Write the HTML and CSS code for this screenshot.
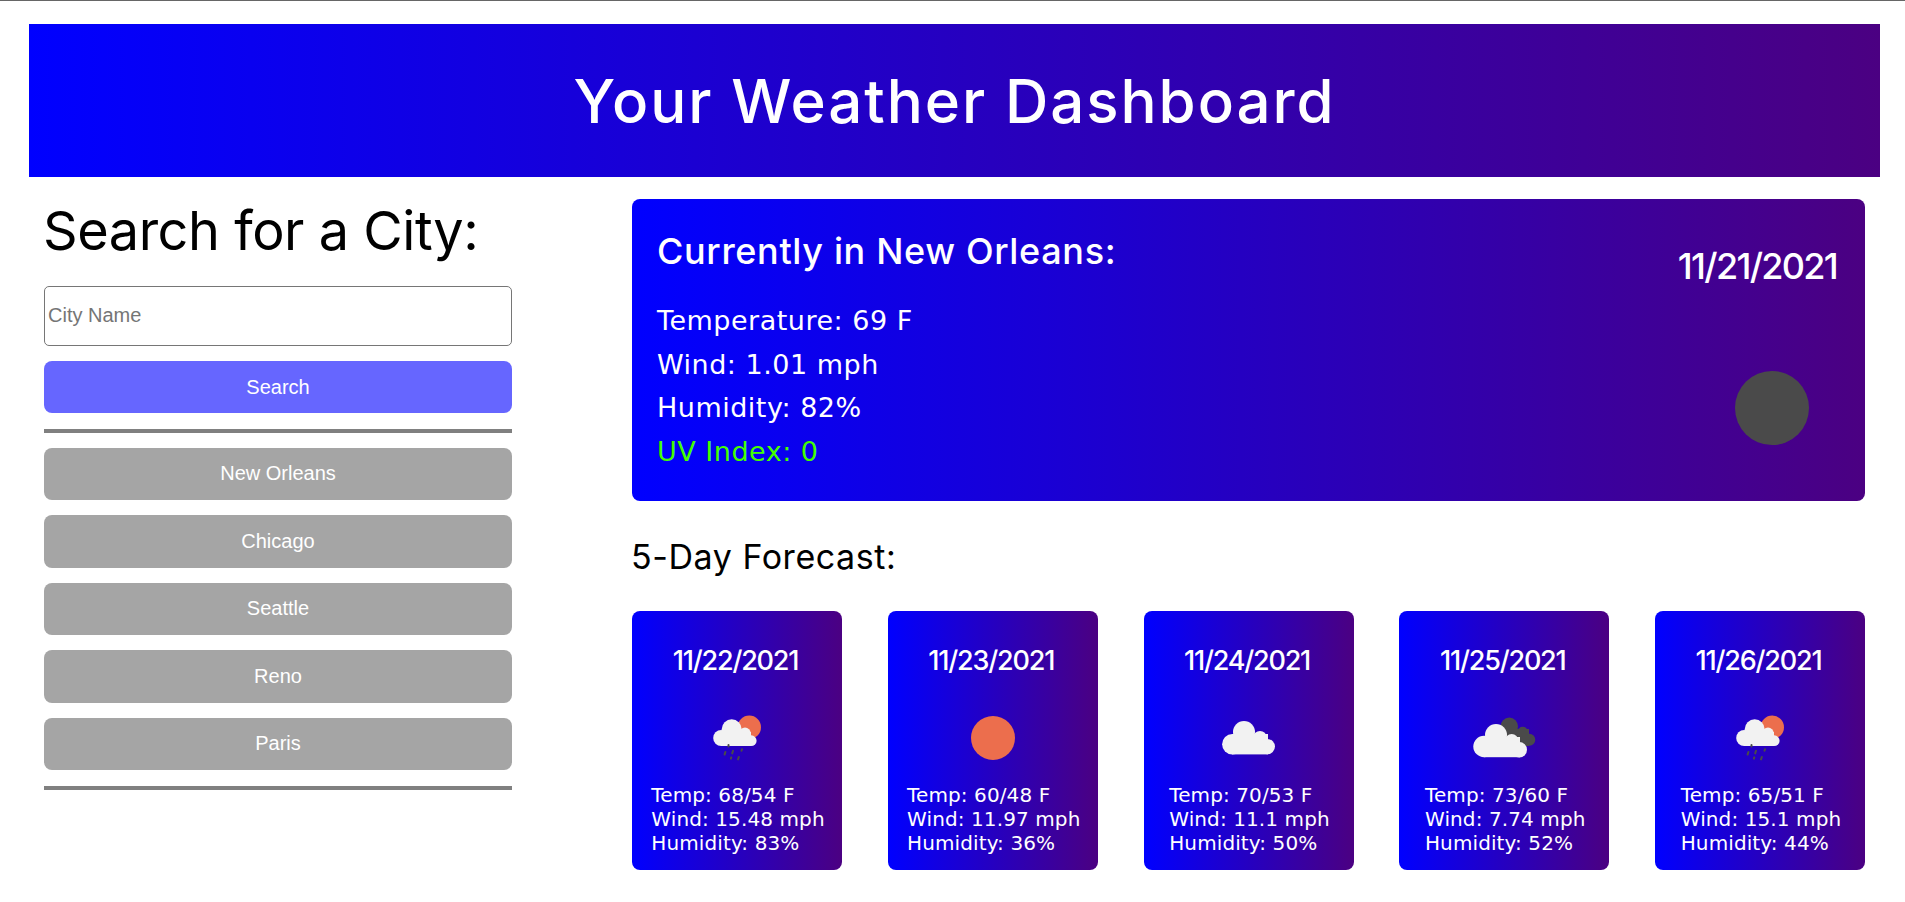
FILE: index.html
```html
<!DOCTYPE html>
<html lang="en">
<head>
  <meta charset="UTF-8">
  <meta name="viewport" content="width=device-width, initial-scale=1.0">
  <title>Your Weather Dashboard</title>
  <link rel="stylesheet" href="styles.css">
</head>
<body>

<header class="banner">
  <h1>Your Weather Dashboard</h1>
</header>

<div class="content">
  <aside class="sidebar">
    <h2 class="search-title">Search for a City:</h2>
    <input class="city-input" type="text" placeholder="City Name">
    <button class="btn btn-search">Search</button>
    <hr class="rule rule-top">
    <div class="history">
      <button class="btn btn-city">New Orleans</button>
      <button class="btn btn-city">Chicago</button>
      <button class="btn btn-city">Seattle</button>
      <button class="btn btn-city">Reno</button>
      <button class="btn btn-city">Paris</button>
    </div>
    <hr class="rule rule-bottom">
  </aside>

  <main class="main">
    <section class="current">
      <div class="current-info">
        <h3 class="current-title">Currently in New Orleans:</h3>
        <p>Temperature: 69 F</p>
        <p>Wind: 1.01 mph</p>
        <p>Humidity: 82%</p>
        <p class="uv">UV Index: 0</p>
      </div>
      <div class="current-side">
        <div class="current-date">11/21/2021</div>
        <div class="current-icon"></div>
      </div>
    </section>

    <h3 class="forecast-title">5-Day Forecast:</h3>

    <section class="forecast">
      <article class="day">
        <div class="day-date">11/22/2021</div>
        <svg class="day-icon" viewBox="0 0 100 100">
          <circle class="sun" cx="62.3" cy="39.3" r="11.7"/>
          <g class="cloud">
            <circle cx="44.7" cy="41.3" r="10"/>
            <circle cx="34.2" cy="50" r="8"/>
            <circle cx="58" cy="45.3" r="5.7"/>
            <circle cx="64.2" cy="52.7" r="5.4"/>
            <rect x="34" y="44" width="30" height="14"/>
          </g>
          <g class="rain">
            <path d="M41.5 57v1.5M38.4 64l-.8 2.6M46 62.8l-.8 2.6M55 61.2l-.5 1.6M44.3 69.4l-.4 1.2M51.8 69l-.8 2.4"/>
          </g>
        </svg>
        <div class="day-text">
          <div>Temp: 68/54 F</div>
          <div>Wind: 15.48 mph</div>
          <div>Humidity: 83%</div>
        </div>
      </article>

      <article class="day">
        <div class="day-date">11/23/2021</div>
        <svg class="day-icon" viewBox="0 0 100 100">
          <circle class="sun" cx="50" cy="50" r="22"/>
        </svg>
        <div class="day-text">
          <div>Temp: 60/48 F</div>
          <div>Wind: 11.97 mph</div>
          <div>Humidity: 36%</div>
        </div>
      </article>

      <article class="day">
        <div class="day-date">11/24/2021</div>
        <svg class="day-icon" viewBox="0 0 100 100">
          <g class="cloud">
            <circle cx="45" cy="44" r="11"/>
            <circle cx="33.3" cy="56.3" r="10.2"/>
            <circle cx="61" cy="49.6" r="6.7"/>
            <circle cx="68.3" cy="58.6" r="7.7"/>
            <rect x="33" y="46" width="36" height="20.4"/>
          </g>
        </svg>
        <div class="day-text">
          <div>Temp: 70/53 F</div>
          <div>Wind: 11.1 mph</div>
          <div>Humidity: 50%</div>
        </div>
      </article>

      <article class="day">
        <div class="day-date">11/25/2021</div>
        <svg class="day-icon" viewBox="0 0 100 100">
          <g class="cloud-dark">
            <circle cx="55.3" cy="38.3" r="8.7"/>
            <circle cx="68.7" cy="43.7" r="5"/>
            <circle cx="75.3" cy="51.7" r="6"/>
            <rect x="51" y="41" width="24" height="17"/>
          </g>
          <g class="cloud">
            <circle cx="42" cy="47" r="11"/>
            <circle cx="30" cy="58.5" r="10.7"/>
            <circle cx="57.7" cy="52.7" r="6.7"/>
            <circle cx="65.3" cy="61.7" r="7.7"/>
            <rect x="30" y="49" width="36" height="20.2"/>
          </g>
        </svg>
        <div class="day-text">
          <div>Temp: 73/60 F</div>
          <div>Wind: 7.74 mph</div>
          <div>Humidity: 52%</div>
        </div>
      </article>

      <article class="day">
        <div class="day-date">11/26/2021</div>
        <svg class="day-icon" viewBox="0 0 100 100">
          <circle class="sun" cx="62.3" cy="39.3" r="11.7"/>
          <g class="cloud">
            <circle cx="44.7" cy="41.3" r="10"/>
            <circle cx="34.2" cy="50" r="8"/>
            <circle cx="58" cy="45.3" r="5.7"/>
            <circle cx="64.2" cy="52.7" r="5.4"/>
            <rect x="34" y="44" width="30" height="14"/>
          </g>
          <g class="rain">
            <path d="M41.5 57v1.5M38.4 64l-.8 2.6M46 62.8l-.8 2.6M55 61.2l-.5 1.6M44.3 69.4l-.4 1.2M51.8 69l-.8 2.4"/>
          </g>
        </svg>
        <div class="day-text">
          <div>Temp: 65/51 F</div>
          <div>Wind: 15.1 mph</div>
          <div>Humidity: 44%</div>
        </div>
      </article>
    </section>
  </main>
</div>

</body>
</html>
```

FILE: styles.css
```css
body {
  margin: 0;
  border-top: 1px solid #666;
  background: #fff;
  font-family: "Liberation Sans", Arial, sans-serif;
}
h1, h2, h3, p {
  margin: 0;
  font-weight: 400;
}
.banner {
  height: 153px;
  margin: 23px 25px 0 29px;
  display: flex;
  align-items: center;
  justify-content: center;
  background: linear-gradient(to right, blue, indigo);
  color: #fff;
}
.banner h1 {
  font-family: Inter, sans-serif;
  font-size: 60px;
  font-weight: 500;
  letter-spacing: 1.95px;
  line-height: 1;
}
.content {
  display: flex;
  padding: 22px 40px 0 44px;
}
.sidebar {
  width: 468px;
  flex: none;
}
.search-title {
  font-family: Inter, sans-serif;
  font-size: 54px;
  letter-spacing: -.45px;
  line-height: 64px;
  margin: 0 0 23px -1px;
}
.city-input {
  display: block;
  box-sizing: border-box;
  width: 100%;
  height: 60px;
  padding: 0 3px 2px;
  border: 1px solid #767676;
  border-radius: 5px;
  font-family: "Liberation Sans", Arial, sans-serif;
  font-size: 20px;
}
.btn {
  display: block;
  width: 100%;
  height: 52.4px;
  border: none;
  border-radius: 8px;
  color: #fff;
  font-family: "Liberation Sans", Arial, sans-serif;
  font-size: 20px;
}
.btn-search {
  margin-top: 15px;
  background: #6666ff;
}
.btn-city {
  background: #a5a5a5;
}
.history {
  display: flex;
  flex-direction: column;
  gap: 15.1px;
}
.rule {
  height: 4px;
  border: none;
  margin: 0;
  background: #808080;
}
.rule-top {
  margin: 15.6px 0 14.8px;
}
.rule-bottom {
  margin-top: 16px;
}
.main {
  flex: 1;
  margin-left: 120px;
}
.current {
  height: 302px;
  box-sizing: border-box;
  display: flex;
  justify-content: space-between;
  padding: 32px 28px 0 25px;
  border-radius: 8px;
  background: linear-gradient(to right, blue, indigo);
  color: #fff;
}
.current-title {
  font-family: Inter, sans-serif;
  font-size: 36px;
  font-weight: 500;
  letter-spacing: .65px;
  line-height: 40px;
  margin-bottom: 28px;
}
.current-info p {
  font-family: "DejaVu Sans", Verdana, sans-serif;
  font-size: 27px;
  letter-spacing: .5px;
  line-height: 43.5px;
}
.current-info .uv {
  color: #44ff00;
}
.current-side {
  display: flex;
  flex-direction: column;
  align-items: flex-end;
}
.current-date {
  font-family: Inter, sans-serif;
  font-size: 36px;
  font-weight: 500;
  letter-spacing: -1.7px;
  line-height: 44px;
  margin-top: 13px;
}
.current-icon {
  width: 74px;
  height: 74px;
  margin: 83px 28px 0 0;
  border-radius: 50%;
  background: #4a4a4a;
}
.forecast-title {
  font-family: Inter, sans-serif;
  font-size: 34px;
  letter-spacing: .55px;
  line-height: 40px;
  margin: 36px 0 34px -1px;
}
.forecast {
  display: flex;
  justify-content: space-between;
}
.day {
  width: 210px;
  height: 259px;
  box-sizing: border-box;
  padding-top: 34px;
  border-radius: 8px;
  background: linear-gradient(to right, blue, indigo);
  color: #fff;
  display: flex;
  flex-direction: column;
  align-items: center;
}
.day-date {
  font-family: Inter, sans-serif;
  font-size: 27px;
  font-weight: 500;
  letter-spacing: -1.2px;
  line-height: 32px;
  margin-left: -3px;
}
.day-icon {
  width: 100px;
  height: 100px;
  margin-top: 11px;
  flex: none;
}
.day-text {
  margin: -5.5px 0 0 2px;
  font-family: "DejaVu Sans", Verdana, sans-serif;
  font-size: 20px;
  letter-spacing: .1px;
  line-height: 24.3px;
  white-space: nowrap;
}
.sun {
  fill: #ec6e4d;
}
.cloud {
  fill: #f2f2f2;
}
.cloud-dark {
  fill: #4a4a4a;
}
.rain path {
  fill: none;
  stroke: #4a4a4a;
  stroke-width: 2;
  stroke-linecap: round;
}
```
